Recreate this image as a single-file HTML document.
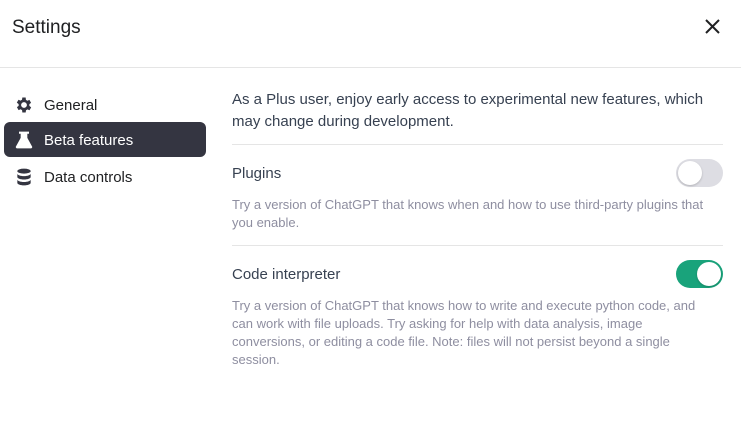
<!DOCTYPE html>
<html><head><style>
*{margin:0;padding:0;box-sizing:border-box}
body{width:741px;height:446px;background:#fff;font-family:"Liberation Sans",sans-serif;color:#202123;position:relative;overflow:hidden}
.abs{position:absolute}
.hdr{left:12px;top:17px;font-size:19px;color:#202123}
.line{height:1px;background:#e5e5e5}
.nav{left:4px;width:202px;height:35px;border-radius:6px;font-size:15px;display:flex;align-items:center;padding-left:40px;padding-top:2px;color:#202123}
.nav.act{background:#343541;color:#fff}
.nav svg{position:absolute;left:10px;top:8px}
.t{font-size:15px;color:#374151}
.d{font-size:13px;color:#8e8ea0;line-height:18px}
.tog{width:47px;height:28px;border-radius:14px}
.knob{position:absolute;top:2px;width:24px;height:24px;border-radius:12px;background:#fff;box-shadow:0 1px 2px rgba(0,0,0,.2)}
</style></head><body>
<div class="abs hdr">Settings</div>
<svg class="abs" style="left:704px;top:18px" width="17" height="17" viewBox="0 0 17 17"><path d="M2 2L15 15M15 2L2 15" stroke="#202123" stroke-width="2"/></svg>
<div class="abs line" style="left:0;top:67px;width:741px"></div>

<div class="abs nav" style="top:87px"><svg width="20" height="20" viewBox="0 0 24 24"><path fill="#343541" d="M19.4 13a7.5 7.5 0 000-2l2.1-1.6-2-3.5-2.5 1a7.6 7.6 0 00-1.7-1L15 3h-4l-.4 2.7a7.6 7.6 0 00-1.7 1l-2.5-1-2 3.5L6.6 11a7.5 7.5 0 000 2l-2.1 1.6 2 3.5 2.5-1a7.6 7.6 0 001.7 1L11 21h4l.4-2.7a7.6 7.6 0 001.7-1l2.5 1 2-3.5zM13 15.5a3.5 3.5 0 110-7 3.5 3.5 0 010 7z" transform="translate(-1 0)"/></svg>General</div>
<div class="abs nav act" style="top:122px"><svg width="20" height="20" viewBox="0 0 24 24"><path fill="#fff" d="M6 2h12v2.5h-2v5l5.5 10a1.5 1.5 0 01-1.3 2.5H3.8a1.5 1.5 0 01-1.3-2.5L8 9.5v-5H6z"/></svg>Beta features</div>
<div class="abs nav" style="top:159px"><svg width="20" height="20" viewBox="0 0 24 24"><g fill="#343541"><ellipse cx="12" cy="5" rx="8" ry="3"/><path d="M4 8c0 1.7 3.6 3 8 3s8-1.3 8-3v4c0 1.7-3.6 3-8 3s-8-1.3-8-3z"/><path d="M4 15c0 1.7 3.6 3 8 3s8-1.3 8-3v4c0 1.7-3.6 3-8 3s-8-1.3-8-3z"/></g></svg>Data controls</div>

<div class="abs t" style="left:232px;top:89px;width:500px;line-height:22px">As a Plus user, enjoy early access to experimental new features, which may change during development.</div>
<div class="abs line" style="left:232px;top:144px;width:491px"></div>
<div class="abs t" style="left:232px;top:165px">Plugins</div>
<div class="abs tog" style="left:676px;top:159px;background:#dddde3"><div class="knob" style="left:2px"></div></div>
<div class="abs d" style="left:232px;top:196px;width:490px">Try a version of ChatGPT that knows when and how to use third-party plugins that you enable.</div>
<div class="abs line" style="left:232px;top:245px;width:491px"></div>
<div class="abs t" style="left:232px;top:266px">Code interpreter</div>
<div class="abs tog" style="left:676px;top:260px;background:#19a37b"><div class="knob" style="left:21px"></div></div>
<div class="abs d" style="left:232px;top:297px;width:482px">Try a version of ChatGPT that knows how to write and execute python code, and can work with file uploads. Try asking for help with data analysis, image conversions, or editing a code file. Note: files will not persist beyond a single session.</div>
</body></html>
